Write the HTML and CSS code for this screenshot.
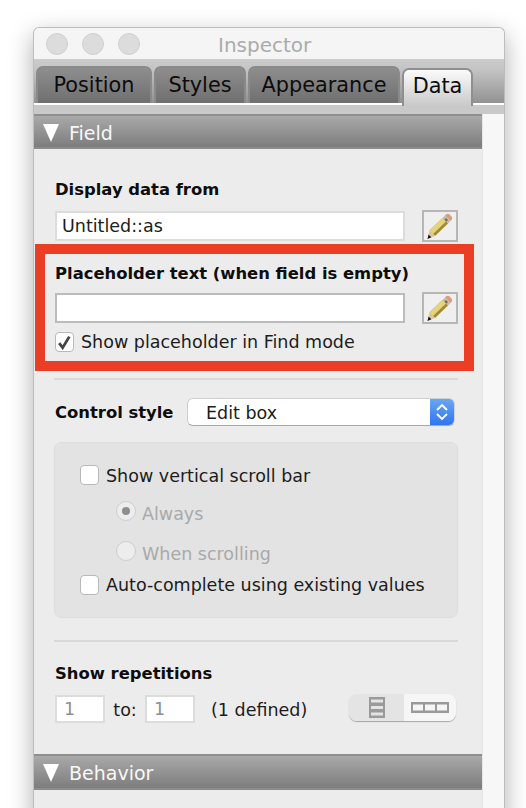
FILE: index.html
```html
<!DOCTYPE html>
<html lang="en">
<head>
    <meta charset="UTF-8">
    <meta name="viewport" content="width=device-width, initial-scale=1.0">
    <title>Inspector</title>
    <link rel="stylesheet" href="styles.css">
</head>
<body>
    <div class="window">
        <div class="titlebar">
            <span class="light"></span>
            <span class="light"></span>
            <span class="light"></span>
            <span class="title">Inspector</span>
        </div>

        <div class="tabs">
            <div class="tab tab-position">Position</div>
            <div class="tab tab-styles">Styles</div>
            <div class="tab tab-appearance">Appearance</div>
            <div class="tab tab-data active">Data</div>
        </div>
        <div class="tabs-foot"></div>

        <div class="body-row">
            <div class="content">
                <div class="section-head"><span class="triangle"></span>Field</div>

                <div class="section-body">
                    <div class="group-first">
                        <div class="label">Display data from</div>
                        <div class="field-row">
                            <div class="input">Untitled::as</div>
                            <div class="pencil-btn">
                                <svg width="28" height="28" viewBox="0 0 28 28">
                                    <path d="M20 2.500q2-1.500 3.500 0l2 2q1.500 1.500 0 3.500l-1 1-5.500-5.500z" fill="#dd9a7c"/>
                                    <path d="M19 3.500l5.500 5.500-2.500 2.500L16.500 6z" fill="#bdbdbd"/>
                                    <path d="M20 6l2 2-2 2-2-2z" fill="#6f6f6f"/>
                                    <path d="M16.500 6l5.500 5.500L9 24l-5.500-5.500z" fill="#a38a30"/>
                                    <path d="M16.500 6l3.500 3.500L7 22l-3.500-3.500z" fill="#e4d47e"/>
                                    <path d="M3.500 18.500L9 24l-7.500 3z" fill="#d8c6a0"/>
                                    <path d="M2.600 22.500l2.700 2.800L1.500 27z" fill="#111"/>
                                </svg>
                            </div>
                        </div>
                    </div>

                    <div class="red-box">
                        <div class="label">Placeholder text (when field is empty)</div>
                        <div class="field-row">
                            <div class="input input-dark"></div>
                            <div class="pencil-btn">
                                <svg width="28" height="28" viewBox="0 0 28 28">
                                    <path d="M20 2.500q2-1.500 3.500 0l2 2q1.500 1.500 0 3.500l-1 1-5.500-5.500z" fill="#dd9a7c"/>
                                    <path d="M19 3.500l5.500 5.500-2.500 2.500L16.500 6z" fill="#bdbdbd"/>
                                    <path d="M20 6l2 2-2 2-2-2z" fill="#6f6f6f"/>
                                    <path d="M16.500 6l5.500 5.500L9 24l-5.500-5.500z" fill="#a38a30"/>
                                    <path d="M16.500 6l3.500 3.500L7 22l-3.500-3.500z" fill="#e4d47e"/>
                                    <path d="M3.500 18.500L9 24l-7.500 3z" fill="#d8c6a0"/>
                                    <path d="M2.600 22.500l2.700 2.800L1.500 27z" fill="#111"/>
                                </svg>
                            </div>
                        </div>
                        <div class="check-row check-placeholder">
                            <span class="checkbox">
                                <svg width="15" height="15" viewBox="0 0 14 14"><path d="M2 7.500l3.300 4.300L11.500 1.500" fill="none" stroke="#444" stroke-width="2.600"/></svg>
                            </span>
                            <span>Show placeholder in Find mode</span>
                        </div>
                    </div>

                    <div class="divider divider-top"></div>

                    <div class="control-row">
                        <div class="label label-inline">Control style</div>
                        <div class="select">
                            <span class="select-value">Edit box</span>
                            <span class="stepper">
                                <svg width="14" height="20" viewBox="0 0 14 20"><path d="M2 8l5-5 5 5M2 12l5 5 5-5" fill="none" stroke="#fff" stroke-width="1.800"/></svg>
                            </span>
                        </div>
                    </div>

                    <div class="panel">
                        <div class="check-row">
                            <span class="checkbox"></span>
                            <span class="check-text">Show vertical scroll bar</span>
                        </div>
                        <div class="radio-row radio-always">
                            <span class="radio"><span class="radio-dot"></span></span>
                            <span class="radio-text">Always</span>
                        </div>
                        <div class="radio-row radio-when">
                            <span class="radio"></span>
                            <span class="radio-text">When scrolling</span>
                        </div>
                        <div class="check-row check-auto">
                            <span class="checkbox"></span>
                            <span>Auto-complete using existing values</span>
                        </div>
                    </div>

                    <div class="divider divider-bottom"></div>

                    <div class="label label-rep">Show repetitions</div>
                    <div class="rep-row">
                        <div class="num-input">1</div>
                        <span class="to">to:</span>
                        <div class="num-input">1</div>
                        <span class="defined">(1 defined)</span>
                        <div class="segment">
                            <div class="seg seg-on">
                                <svg width="16" height="21" viewBox="0 0 16 21"><path d="M0 0h16v21H0z" fill="#9a9a9a"/><path d="M2 2.500h12v3H2zM2 9h12v3H2zM2 15.500h12v3H2z" fill="#e4e4e4"/></svg>
                            </div>
                            <div class="seg seg-off">
                                <svg width="38" height="11" viewBox="0 0 38 11"><path d="M0 0h38v11H0z" fill="#9a9a9a"/><path d="M2 2.500h10v6H2zM14 2.500h10v6H14zM26 2.500h10v6H26z" fill="#f6f6f6"/></svg>
                            </div>
                        </div>
                    </div>
                </div>

                <div class="section-head section-behavior"><span class="triangle"></span>Behavior</div>
            </div>
            <div class="scroll-track"></div>
        </div>
    </div>
</body>
</html>
```

FILE: styles.css
```css
html, body {
    height: 100%;
    overflow: hidden;
}

body {
    margin: 0;
    padding: 27px 0 0 33px;
    box-sizing: border-box;
    background: #fff;
    font-family: "DejaVu Sans", sans-serif;
    color: #1c1c1c;
}

.window {
    width: 472px;
    height: 800px;
    box-sizing: border-box;
    background: #f7f7f7;
    border: 1px solid #bdbdbd;
    border-bottom: none;
    border-radius: 6px 6px 0 0;
    box-shadow: 0 8px 24px rgba(0, 0, 0, 0.32);
}

/* title bar */
.titlebar {
    display: flex;
    align-items: center;
    gap: 14px;
    height: 31px;
    padding-left: 12px;
    background: #f5f5f5;
    border-radius: 6px 6px 0 0;
    position: relative;
}
.light {
    width: 22px;
    height: 22px;
    box-sizing: border-box;
    border-radius: 50%;
    background: #dcdcdc;
    border: 1px solid #d0d0d0;
}
.title {
    position: absolute;
    left: 184px;
    top: 5px;
    font-size: 20px;
    color: #ababab;
}

/* tabs */
.tabs {
    display: flex;
    align-items: flex-end;
    height: 44px;
    padding-left: 2px;
    gap: 2px;
    box-sizing: border-box;
    background: linear-gradient(#cbcbcb, #c6c6c6 20%, #929292);
}
.tab {
    height: 37px;
    box-sizing: border-box;
    text-align: center;
    font-size: 20.800px;
    line-height: 34px;
    color: #0c0c0c;
    background: linear-gradient(#8e8e8e, #6f6f6f);
    border: 2px solid #8a8a8a;
    border-bottom: none;
    border-radius: 7px 7px 0 0;
}
.tab-position { width: 116px; }
.tab-styles { width: 92px; }
.tab-appearance { width: 152px; }
.tab-data {
    width: 71px;
    height: 38px;
    margin-bottom: -3px;
    line-height: 32px;
    position: relative;
    background: linear-gradient(#fbfbfb, #c9c9c9);
    border-color: #8f8f8f;
}
.tabs-foot {
    height: 9px;
    background: #c9c9c9;
    border-top: 2px solid #fff;
}

.body-row {
    display: flex;
    height: 700px;
}
.content {
    width: 448px;
    background: #ececec;
}
.scroll-track {
    flex: 1;
    background: #f7f7f7;
    border-left: 1px solid #e6e6e6;
}

/* collapsible section header */
.section-head {
    display: flex;
    align-items: center;
    height: 35px;
    box-sizing: border-box;
    padding: 2px 0 0 9px;
    font-size: 19px;
    color: #f8f8f8;
    background: linear-gradient(#a9a9a9, #7d7d7d);
    border-top: 2px solid #8f8f8f;
    border-bottom: 2px solid #8c8c8c;
}
.triangle {
    width: 0;
    height: 0;
    margin-right: 10px;
    border-left: 8.500px solid transparent;
    border-right: 8.500px solid transparent;
    border-top: 18px solid #fff;
}
.section-behavior {
    margin-top: 31px;
    height: 36px;
}

.section-body {
    padding: 0 24px 0 21px;
}

.group-first {
    padding-top: 30px;
    height: 95px;
    box-sizing: border-box;
}
.label {
    font-size: 16.400px;
    font-weight: bold;
    line-height: 22px;
    color: #0d0d0d;
}
.field-row {
    display: flex;
    align-items: center;
    margin-top: 9px;
}
.input {
    width: 350px;
    height: 30px;
    box-sizing: border-box;
    padding-left: 5px;
    background: #fff;
    border: 2px solid #dcdcdc;
    font-size: 17.500px;
    line-height: 26px;
}
.input-dark {
    border-color: #bcbcbc;
}
.pencil-btn {
    display: flex;
    align-items: center;
    justify-content: center;
    width: 36px;
    height: 32px;
    margin-left: 17px;
    box-sizing: border-box;
    border: 2px solid #b6b6b6;
    background: #efefef;
}

/* red highlight */
.red-box {
    margin-left: -20px;
    width: 439px;
    height: 127px;
    box-sizing: border-box;
    padding: 9px 0 0 10px;
    border: 10px solid #ea3f25;
}
.red-box .field-row {
    margin-top: 7px;
}

.check-row {
    display: flex;
    align-items: center;
    gap: 7px;
    font-size: 17.500px;
    line-height: 20px;
}
.check-placeholder {
    margin-top: 8px;
}
.check-text {
    padding-top: 1px;
}
.checkbox {
    display: flex;
    align-items: center;
    justify-content: center;
    width: 19px;
    height: 20px;
    box-sizing: border-box;
    background: #fff;
    border: 1px solid #b9b9b9;
    border-radius: 4px;
}

.divider {
    height: 2px;
    background: #d9d9d9;
    width: 404px;
    margin-left: -1px;
}
.divider-top {
    margin-top: 7px;
}
.divider-bottom {
    margin-top: 22px;
}

.control-row {
    display: flex;
    align-items: center;
    margin-top: 18px;
}
.label-inline {
    width: 132px;
    padding-top: 2px;
}
.select {
    display: flex;
    justify-content: space-between;
    width: 268px;
    height: 28px;
    box-sizing: border-box;
    background: #fff;
    border-radius: 6px;
    border: 1px solid #cfcfcf;
    border-bottom-color: #a8a8a8;
    font-size: 17.500px;
    line-height: 28px;
    overflow: hidden;
}
.select-value {
    padding-left: 18px;
}
.stepper {
    display: flex;
    align-items: center;
    justify-content: center;
    width: 24px;
    background: linear-gradient(#6ba6f4, #2f76ee);
}

/* grey group */
.panel {
    width: 404px;
    height: 176px;
    margin-top: 16px;
    margin-left: -1px;
    box-sizing: border-box;
    padding: 22px 0 0 25px;
    background: #e3e3e3;
    border: 1px solid #dedede;
    border-radius: 7px;
}
.panel .check-row,
.panel .radio-row {
    align-items: flex-start;
}
.radio-row {
    display: flex;
    align-items: center;
    gap: 6px;
    margin-left: 36px;
    font-size: 17.500px;
    line-height: 20px;
    color: #a9a9a9;
}
.radio-text {
    padding-top: 3px;
}
.radio-always {
    margin-top: 15px;
}
.radio-when {
    margin-top: 17px;
}
.check-auto {
    margin-top: 11px;
}
.radio {
    display: flex;
    align-items: center;
    justify-content: center;
    width: 20px;
    height: 20px;
    box-sizing: border-box;
    border-radius: 50%;
    background: #ededed;
    border: 1px solid #cdcdcd;
}
.radio-dot {
    width: 8px;
    height: 8px;
    border-radius: 50%;
    background: #8e8e8e;
}

/* repetitions */
.label-rep {
    margin-top: 21px;
}
.rep-row {
    display: flex;
    align-items: center;
    margin-top: 10px;
    font-size: 17.500px;
}
.num-input {
    width: 50px;
    height: 28px;
    box-sizing: border-box;
    padding-left: 7px;
    background: #fff;
    border: 2px solid #dcdcdc;
    color: #8f8f8f;
    line-height: 25px;
}
.to {
    width: 40px;
    text-align: center;
    padding-top: 2px;
}
.defined {
    margin-left: 16px;
    width: 138px;
    padding-top: 2px;
}
.segment {
    display: flex;
    width: 107px;
    height: 27px;
    margin-top: -4px;
    border-radius: 8px;
    overflow: hidden;
    box-shadow: 0 1px 1px rgba(0, 0, 0, 0.3);
}
.seg {
    display: flex;
    align-items: center;
    justify-content: center;
}
.seg-on {
    width: 55px;
    background: #e4e4e4;
}
.seg-off {
    flex: 1;
    background: #f6f6f6;
}
```
